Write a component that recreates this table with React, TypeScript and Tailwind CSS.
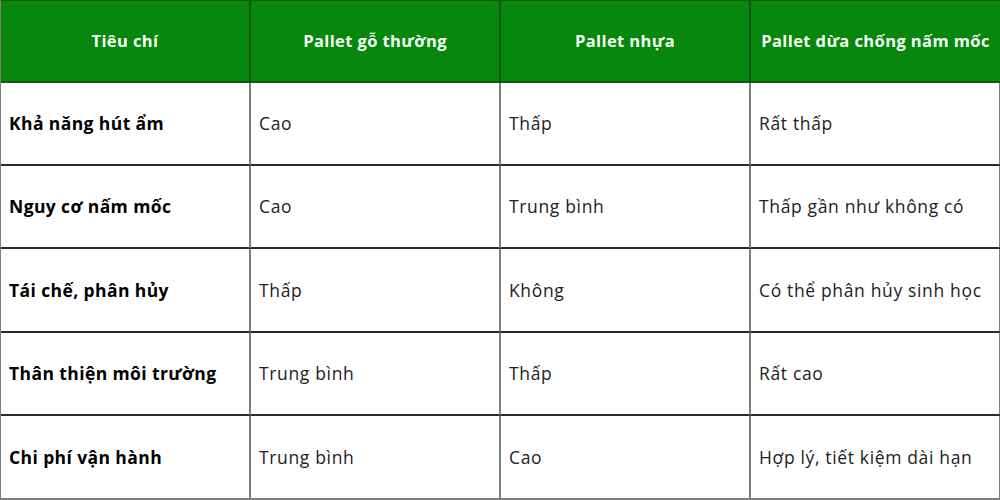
import React from "react";

const headers = ["Tiêu chí", "Pallet gỗ thường", "Pallet nhựa", "Pallet dừa chống nấm mốc"];
const rows = [
  ["Khả năng hút ẩm", "Cao", "Thấp", "Rất thấp"],
  ["Nguy cơ nấm mốc", "Cao", "Trung bình", "Thấp gần như không có"],
  ["Tái chế, phân hủy", "Thấp", "Không", "Có thể phân hủy sinh học"],
  ["Thân thiện môi trường", "Trung bình", "Thấp", "Rất cao"],
  ["Chi phí vận hành", "Trung bình", "Cao", "Hợp lý, tiết kiệm dài hạn"],
];

export default function App() {
  return (
    <div
      className="w-[1000px] h-[500px] bg-white overflow-hidden"
      style={{ fontFamily: '"Open Sans", "Noto Sans", sans-serif' }}
    >
      <div className="grid grid-cols-[250px_250px_250px_250px] grid-rows-[83px_83px_83px_84px_83px_84px] h-[500px] border-l border-[#7f7f7f]">
        {headers.map((h, i) => (
          <div
            key={h}
            className={`flex items-center justify-center bg-[#07870c] text-[#f4fff4] font-bold text-[16.5px] tracking-[0.4px] border-t border-b-2 border-[#0b5a0f] ${
              i < 3 ? "border-r-2" : "border-r"
            }`}
          >
            {h}
          </div>
        ))}
        {rows.map((r, ri) =>
          r.map((c, ci) => (
            <div
              key={ri + "-" + ci}
              className={`flex items-center pl-2 text-[17.5px] ${
                ci === 0 ? "font-bold text-black tracking-[0.4px]" : "font-normal text-[#222222] tracking-[0.65px]"
              } border-r-2 border-r-[#7f7f7f] ${
                ri < 4 ? "border-b-2 border-b-[#2a2a2a]" : "border-b-2 border-b-[#7f7f7f]"
              }`}
            >
              {c}
            </div>
          ))
        )}
      </div>
    </div>
  );
}
